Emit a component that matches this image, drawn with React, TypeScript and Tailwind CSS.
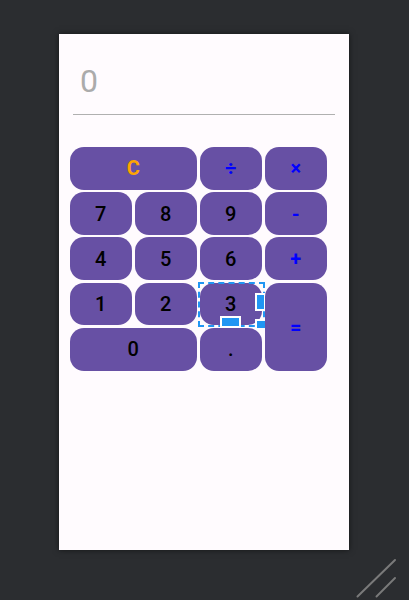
import React from "react";

type Key = { label: string; kind: "digit" | "op" | "clear"; cls?: string; selected?: boolean };

const keys: Key[] = [
  { label: "C", kind: "clear", cls: "col-span-2" },
  { label: "÷", kind: "op" },
  { label: "×", kind: "op" },
  { label: "7", kind: "digit" },
  { label: "8", kind: "digit" },
  { label: "9", kind: "digit" },
  { label: "-", kind: "op" },
  { label: "4", kind: "digit" },
  { label: "5", kind: "digit" },
  { label: "6", kind: "digit" },
  { label: "+", kind: "op" },
  { label: "1", kind: "digit" },
  { label: "2", kind: "digit" },
  { label: "3", kind: "digit", selected: true },
  { label: "=", kind: "op", cls: "row-span-2" },
  { label: "0", kind: "digit", cls: "col-span-2" },
  { label: ".", kind: "digit" },
];

function Btn({ k }: { k: Key }) {
  const color =
    k.kind === "clear"
      ? "text-[#ffa500] font-bold"
      : k.kind === "op"
      ? "text-[#0000ff] font-bold"
      : "text-black font-medium";
  return (
    <div className={`relative ${k.cls ?? ""}`}>
      <div
        className={`w-full h-full rounded-[14px] bg-[#6750a4] flex items-center justify-center text-[20px] leading-none ${color}`}
      >
        {k.label}
      </div>
      {k.selected && (
        <div className="absolute -left-[2px] -top-[1px] -right-[3px] -bottom-[2px] pointer-events-none">
          <div className="absolute inset-0 border-2 border-dashed border-[#2196f3]" />
          <div className="absolute right-[-1px] top-[11px] w-[11px] h-[18px] bg-[#2196f3] border-2 border-white" />
          <div className="absolute left-[22px] bottom-[-1px] w-[21px] h-[12px] bg-[#2196f3] border-2 border-white" />
          <div className="absolute right-[-1px] bottom-[-1px] w-[11px] h-[9px] bg-[#2196f3] border-2 border-white border-r-0 border-b-0" />
        </div>
      )}
    </div>
  );
}

export default function App() {
  return (
    <div
      className="relative w-[409px] h-[600px] bg-[#2b2d30] pt-[34px] pl-[59px]"
      style={{ fontFamily: "Roboto, 'Noto Sans', sans-serif" }}
    >
      <div className="w-[290px] h-[516px] bg-[#fffbfe] shadow-[0_0_6px_rgba(0,0,0,0.55)] pt-[31px]">
        <div className="pl-[21px] h-[32px] text-[32px] leading-[32px] text-[#ababab]">0</div>
        <div className="mx-[14px] mt-[17px] h-px bg-[#b0b0b0]" />
        <div className="ml-[11px] mt-[32px] grid grid-cols-[repeat(4,61.6px)] grid-rows-[repeat(5,42.8px)] gap-x-[3.4px] gap-y-[2.4px]">
          {keys.map((k, i) => (
            <Btn key={i} k={k} />
          ))}
        </div>
      </div>
      <svg className="absolute left-[350px] top-[552px]" width="59" height="48" viewBox="350 552 59 48">
        <line x1="357.5" y1="596.5" x2="395" y2="560" stroke="#7a7a7a" strokeWidth="2" strokeLinecap="round" />
        <line x1="376.5" y1="596.5" x2="395" y2="578" stroke="#7a7a7a" strokeWidth="2" strokeLinecap="round" />
      </svg>
    </div>
  );
}
